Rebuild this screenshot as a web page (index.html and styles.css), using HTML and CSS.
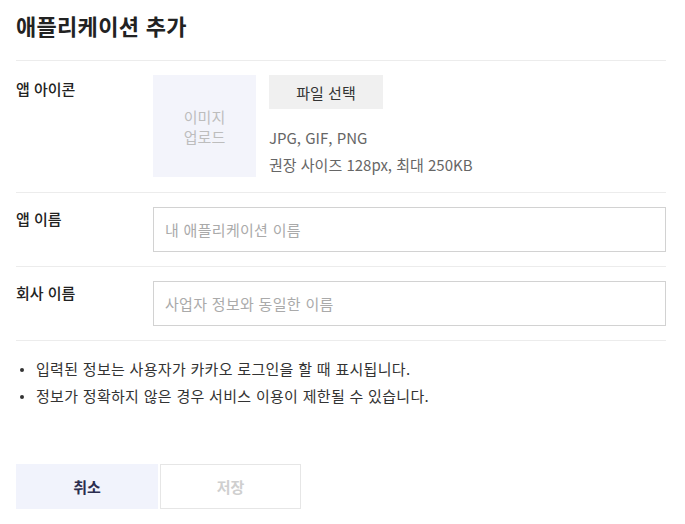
FILE: index.html
```html
<!DOCTYPE html>
<html lang="ko">
<head>
<meta charset="utf-8">
<link rel="stylesheet" href="styles.css">
</head>
<body>
<div class="page">
  <h1 class="title">애플리케이션 추가</h1>
  <div class="form">
    <div class="row">
      <div class="label">앱 아이콘</div>
      <div class="field icon-field">
        <div class="upload">이미지<br>업로드</div>
        <div class="file-info">
          <button class="file-btn" type="button">파일 선택</button>
          <p class="hint">JPG, GIF, PNG<br>권장 사이즈 128px, 최대 250KB</p>
        </div>
      </div>
    </div>
    <div class="row">
      <div class="label">앱 이름</div>
      <div class="field"><input class="text-input" type="text" placeholder="내 애플리케이션 이름"></div>
    </div>
    <div class="row">
      <div class="label">회사 이름</div>
      <div class="field"><input class="text-input" type="text" placeholder="사업자 정보와 동일한 이름"></div>
    </div>
  </div>
  <ul class="notes">
    <li>입력된 정보는 사용자가 카카오 로그인을 할 때 표시됩니다.</li>
    <li>정보가 정확하지 않은 경우 서비스 이용이 제한될 수 있습니다.</li>
  </ul>
  <div class="actions">
    <button class="btn btn-cancel" type="button">취소</button>
    <button class="btn btn-save" type="button" disabled>저장</button>
  </div>
</div>
</body>
</html>
```

FILE: styles.css
```css
* { box-sizing: border-box; }
html, body { margin: 0; padding: 0; background: #fff; }
body {
  font-family: "Noto Sans CJK KR", "Noto Sans", sans-serif;
  color: #333;
  font-size: 15px;
}
.page {
  width: 650px;
  margin-left: 16px;
}
.title {
  margin: 0;
  padding-top: 9px;
  height: 60px;
  font-size: 22px;
  line-height: 32px;
  font-weight: 700;
  color: #222;
  letter-spacing: 0.3px;
}
.form {
  border-top: 1px solid #ececec;
}
.row {
  display: flex;
  padding: 14px 0;
  border-bottom: 1px solid #ececec;
}
.label {
  width: 137px;
  flex: none;
  padding-top: 2px;
  font-size: 15px;
  line-height: 20px;
  font-weight: 500;
  color: #222;
}
.row:first-child .label { padding-top: 4px; }
.field { flex: 1; }
.icon-field {
  display: flex;
  gap: 13px;
}
.upload {
  width: 103px;
  height: 102px;
  background: #f3f4fb;
  color: #bdbdbd;
  font-size: 15px;
  line-height: 20px;
  display: flex;
  align-items: center;
  justify-content: center;
  text-align: center;
  padding-top: 1px;
}
.file-info { display: flex; flex-direction: column; align-items: flex-start; }
.file-btn {
  width: 114px;
  height: 34px;
  border: none;
  background: #f0f0f0;
  font-family: inherit;
  font-size: 15px;
  color: #333;
  padding: 0;
}
.hint {
  margin: 15px 0 0;
  font-size: 15px;
  line-height: 27px;
  color: #666;
}
.text-input {
  display: block;
  width: 100%;
  height: 45px;
  border: 1px solid #d2d2d2;
  padding: 0 11px;
  font-family: inherit;
  font-size: 15px;
  color: #333;
  outline: none;
  letter-spacing: 0.3px;
}
.text-input::placeholder { color: #aaa; }
.notes {
  list-style: none;
  margin: 0;
  padding: 14px 0 0;
  height: 123px;
}
.notes li {
  position: relative;
  padding-left: 20px;
  line-height: 27px;
  font-size: 15px;
  color: #333;
  letter-spacing: 0.3px;
}
.notes li::before {
  content: "";
  position: absolute;
  left: 4px;
  top: 13px;
  width: 4px;
  height: 4px;
  border-radius: 50%;
  background: #333;
}
.actions {
  display: flex;
  gap: 2px;
}
.btn {
  width: 142px;
  height: 45px;
  font-family: inherit;
  font-size: 15px;
  font-weight: 700;
  padding: 0;
}
.btn-cancel {
  background: #f1f3fc;
  border: none;
  color: #2b2d4f;
}
.btn-save {
  width: 141px;
  background: #fff;
  border: 1px solid #e6e6e6;
  color: #cfcfcf;
}
```
